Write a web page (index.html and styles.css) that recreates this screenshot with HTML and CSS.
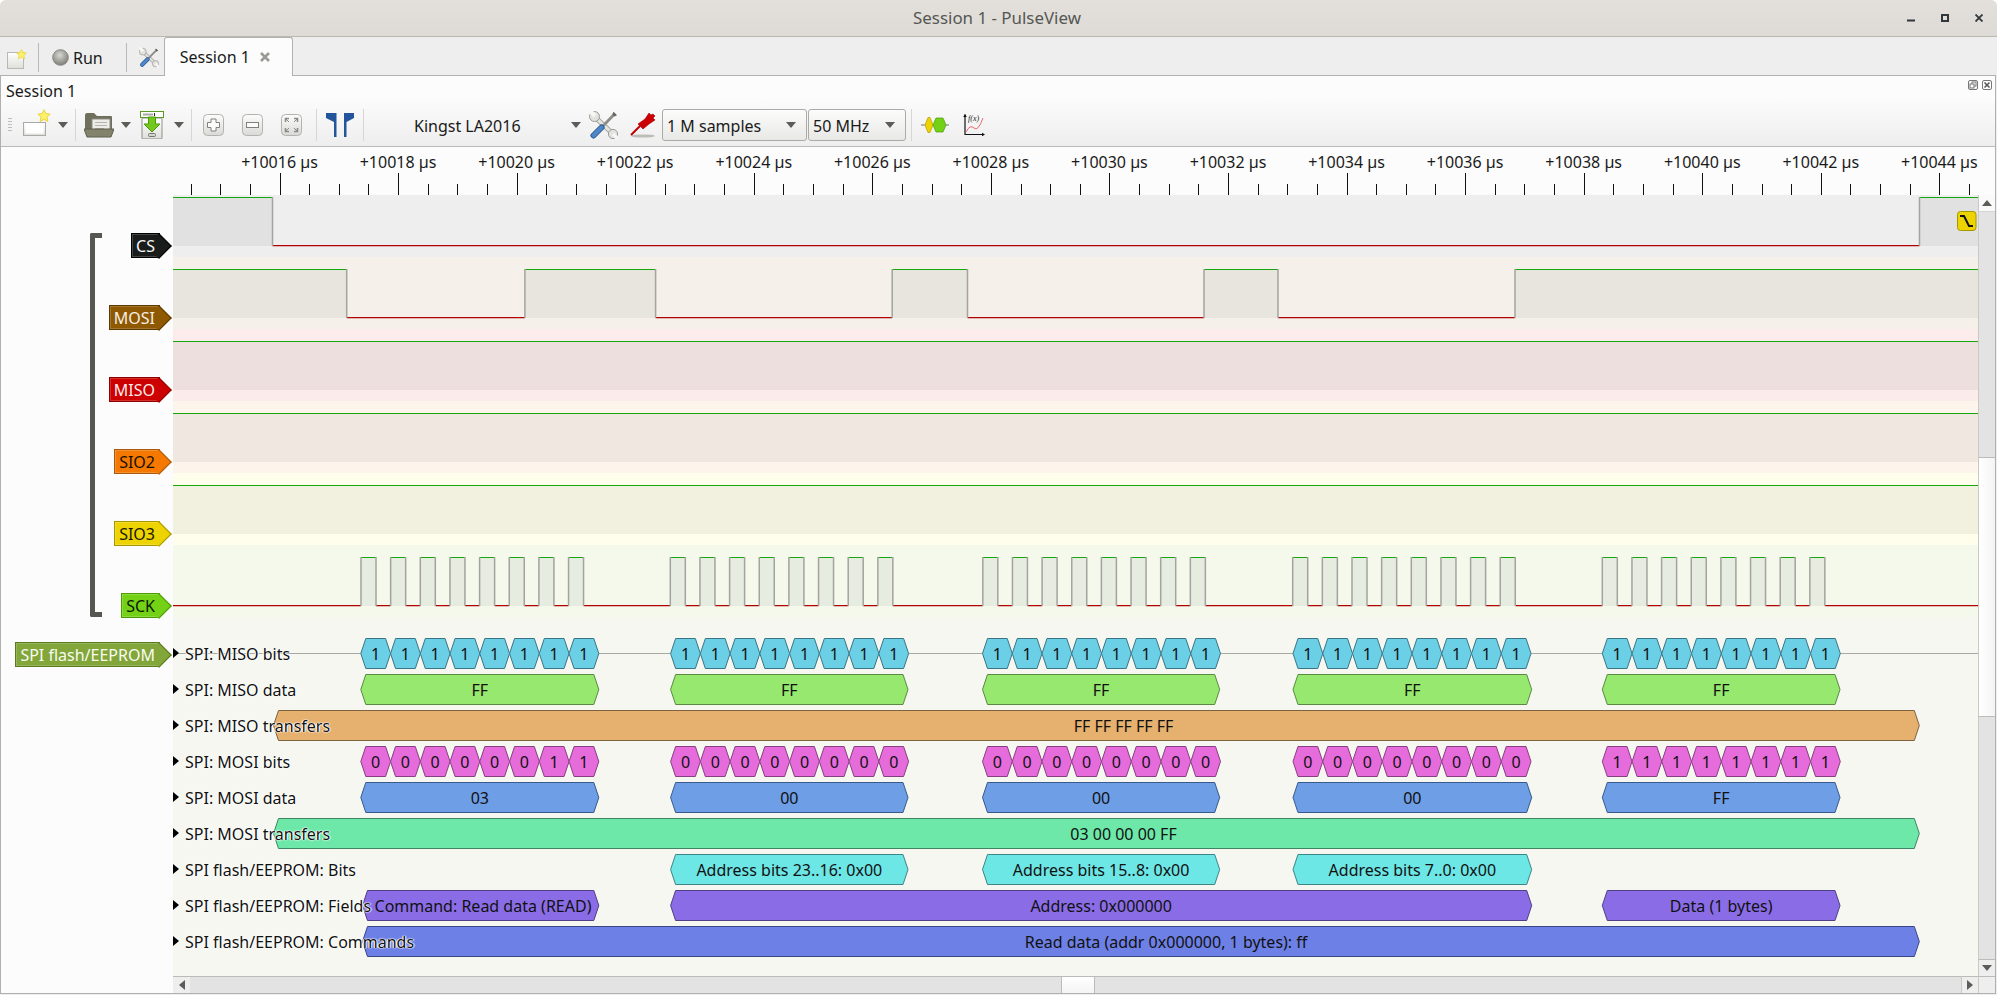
FILE: index.html
```html
<!DOCTYPE html>
<html lang="en">
<head>
    <meta charset="UTF-8">
    <meta name="viewport" content="width=device-width, initial-scale=1.0">
    <title>Session 1 - PulseView</title>
    <link rel="stylesheet" href="styles.css">
</head>
<body>
    <svg class="defs" width="0" height="0">
        <defs>
            <radialGradient id="runball" cx="45%" cy="35%" r="70%">
                <stop offset="0" stop-color="#d8d8d4"/>
                <stop offset="1" stop-color="#77776f"/>
            </radialGradient>
            <linearGradient id="btnface" x1="0" y1="0" x2="0" y2="1">
                <stop offset="0" stop-color="#fdfdfd"/>
                <stop offset="1" stop-color="#d9d9d6"/>
            </linearGradient>
            <linearGradient id="sheet" x1="0" y1="0" x2="0" y2="1">
                <stop offset="0" stop-color="#ffffff"/>
                <stop offset="1" stop-color="#dededa"/>
            </linearGradient>
            <symbol id="tools" viewBox="0 0 29 28">
                <path d="M6 6 L24 23" stroke="#9a9a96" stroke-width="5"/>
                <path d="M6 6 L24 23" stroke="#e2e2de" stroke-width="3.2"/>
                <circle cx="5.5" cy="5.5" r="5" fill="#e2e2de" stroke="#9a9a96"/>
                <path d="M1 0 L6 5" stroke="#f6f6f4" stroke-width="4.4"/>
                <circle cx="24" cy="23" r="4.6" fill="#e2e2de" stroke="#9a9a96"/>
                <path d="M29 28 L24 23" stroke="#f6f6f4" stroke-width="3.6"/>
                <path d="M26 2.5 L14 15" stroke="#8c8c88" stroke-width="2.8"/>
                <path d="M24.5 .8 L28 4.2 L25.6 5.4 L23.4 3.2 Z" fill="#66665f"/>
                <path d="M12.5 16.5 L4.5 24.5" stroke="#2f5a94" stroke-width="6" stroke-linecap="round"/>
                <path d="M12.5 16.5 L4.5 24.5" stroke="#4f86c8" stroke-width="4" stroke-linecap="round"/>
            </symbol>
            <symbol id="star" viewBox="0 0 12 12">
                <path d="M6 .6 L7.6 3.9 L11.3 4.4 L8.6 7 L9.3 10.7 L6 8.9 L2.7 10.7 L3.4 7 L.7 4.4 L4.4 3.9 Z" fill="#fdf06a" stroke="#e8d23a" stroke-width=".8"/>
            </symbol>
        </defs>
    </svg>

    <div class="window">
        <header class="titlebar">
            <span class="title">Session 1 - PulseView</span>
            <div class="win-btns">
                <svg width="8" height="8" viewBox="0 0 8 8"><rect y="5.5" width="8" height="2" fill="#31363b"/></svg>
                <svg width="8" height="8" viewBox="0 0 8 8"><rect x="1" y="1" width="6" height="6" fill="none" stroke="#31363b" stroke-width="2"/></svg>
                <svg width="8" height="8" viewBox="0 0 8 8"><path d="M.5 .5 L7.5 7.5 M7.5 .5 L.5 7.5" stroke="#31363b" stroke-width="1.8"/></svg>
            </div>
        </header>

        <div class="tabbar">
            <svg class="tab-new" width="20" height="20" viewBox="0 0 20 20">
                <rect x=".5" y="3.5" width="16" height="16" fill="url(#sheet)" stroke="#b8b8b4"/>
                <use href="#star" x="9" y="0" width="11" height="11"/>
            </svg>
            <span class="tab-sep tab-sep-a"></span>
            <svg class="run-ball" width="17" height="17" viewBox="0 0 17 17"><circle cx="8.5" cy="8.5" r="7.8" fill="url(#runball)" stroke="#888884"/></svg>
            <span class="run-text">Run</span>
            <span class="tab-sep tab-sep-b"></span>
            <svg class="tab-tools" width="20" height="21"><use href="#tools" width="20" height="21"/></svg>
            <div class="tab">
                <span>Session 1</span>
                <svg class="tab-close" width="10" height="10" viewBox="0 0 10 10"><path d="M1 1 L9 9 M9 1 L1 9" stroke="#999995" stroke-width="2.6"/></svg>
            </div>
        </div>

        <section class="panel">
            <div class="dock-title">
                <span>Session 1</span>
                <div class="dock-btns">
                    <svg width="10" height="10" viewBox="0 0 10 10"><rect x=".5" y=".5" width="9" height="9" rx="1.5" fill="none" stroke="#777"/><rect x="4" y="2" width="4" height="4" fill="none" stroke="#777"/><rect x="2" y="4" width="4" height="4" fill="#fcfcfc" stroke="#777"/></svg>
                    <svg width="10" height="10" viewBox="0 0 10 10"><rect x=".5" y=".5" width="9" height="9" rx="1.5" fill="none" stroke="#777"/><path d="M2.5 2.5 L7.5 7.5 M7.5 2.5 L2.5 7.5" stroke="#555" stroke-width="1.5"/></svg>
                </div>
            </div>

            <div class="toolbar">
                <span class="handle"></span>
                <svg class="tb-new" width="28" height="27" viewBox="0 0 28 27">
                    <rect x=".5" y="13.5" width="22" height="13" fill="url(#sheet)" stroke="#a9a9a5"/>
                    <rect x="2.5" y="15.5" width="18" height="9" fill="#fff"/>
                    <use href="#star" x="14" y="0" width="14" height="14"/>
                </svg>
                <span class="drop tb-drop"></span>
                <span class="sep tb-sep"></span>
                <svg class="tb-open" width="30" height="26" viewBox="0 0 30 26">
                    <path d="M1 3 Q1 1 3 1 H10 L13 4 H27 Q28 4 28 5 V20 H1 Z" fill="#6f6f5c"/>
                    <rect x="8" y="7" width="18" height="13" fill="#ecece8" stroke="#8d8d84"/>
                    <path d="M11 10.5 H23 M11 13.5 H23 M11 16.5 H20" stroke="#b5b5ae"/>
                    <path d="M0 17 H30 L27 25 H3 Z" fill="#83836d" stroke="#5f5f4f"/>
                </svg>
                <span class="drop tb-drop"></span>
                <svg class="tb-save" width="24" height="28" viewBox="0 0 24 28">
                    <rect x="2" y="7" width="20" height="21" rx="1" fill="url(#sheet)" stroke="#8f8f8a"/>
                    <rect x=".5" y=".5" width="23" height="6" fill="#fff" stroke="#5a9a20"/>
                    <rect x="3" y="2.5" width="10" height="2" fill="#a8a8a4"/><rect x="14" y="2" width="1" height="3" fill="#222"/>
                    <path d="M8.5 6 H15.5 V13 H20 L12 21 L4 13 H8.5 Z" fill="#73c820" stroke="#4e9a06"/>
                    <rect x="8.5" y="22.5" width="7" height="3" rx="1" fill="#d4d4d0" stroke="#77776f"/>
                </svg>
                <span class="drop tb-drop-wide"></span>
                <span class="sep tb-sep"></span>
                <svg class="tb-plus" width="21" height="22" viewBox="0 0 21 22">
                    <rect x=".5" y=".5" width="20" height="21" rx="4" fill="url(#btnface)" stroke="#b2b2ae"/>
                    <path d="M8 5 H13 V8.5 H16.5 V13.5 H13 V17 H8 V13.5 H4.5 V8.5 H8 Z" fill="#fbfbfb" stroke="#80807c"/>
                </svg>
                <svg class="tb-minus" width="21" height="22" viewBox="0 0 21 22">
                    <rect x=".5" y=".5" width="20" height="21" rx="4" fill="url(#btnface)" stroke="#b2b2ae"/>
                    <rect x="4.5" y="8.5" width="12" height="5" fill="#fbfbfb" stroke="#80807c"/>
                </svg>
                <svg class="tb-fit" width="21" height="22" viewBox="0 0 21 22">
                    <rect x=".5" y=".5" width="20" height="21" rx="4" fill="url(#btnface)" stroke="#b2b2ae"/>
                    <path d="M4.5 8 V4.5 H8 M13 4.5 H16.5 V8 M4.5 14 V17.5 H8 M13 17.5 H16.5 V14" fill="none" stroke="#8a8a86" stroke-width="1.6"/>
                    <path d="M5 5 L8 8 M16 5 L13 8 M5 17 L8 14 M16 17 L13 14" stroke="#8a8a86"/>
                </svg>
                <span class="sep tb-sep-fit"></span>
                <svg class="tb-markers" width="28" height="24" viewBox="0 0 28 24">
                    <path d="M0 0 H10.5 V24 H8 V9 L0 5 Z" fill="#24559c"/>
                    <path d="M28 0 H18 V24 H20.5 V9 L28 5 Z" fill="#24559c"/>
                </svg>
                <span class="sep tb-sep-markers"></span>
                <div class="device">
                    <span>Kingst LA2016</span>
                    <span class="drop"></span>
                </div>
                <svg class="tb-tools" width="29" height="28"><use href="#tools" width="29" height="28"/></svg>
                <svg class="tb-probe" width="26" height="27" viewBox="0 0 26 27">
                    <ellipse cx="13" cy="25" rx="12" ry="1.6" fill="#bdbdb8"/>
                    <path d="M1 24 L10 15" stroke="#c00000" stroke-width="2"/>
                    <path d="M8 13 L15 8 L19 2 L21 4 L23 3 L25 5 L23 7 L25 9 L19 13 L13 18 Z" fill="#cc0000" stroke="#a40000" stroke-width=".6"/>
                </svg>
                <div class="combo combo-samples">
                    <span>1 M samples</span>
                    <span class="drop"></span>
                </div>
                <div class="combo combo-rate">
                    <span>50 MHz</span>
                    <span class="drop"></span>
                </div>
                <span class="sep tb-sep-rate"></span>
                <svg class="tb-decoder" width="28" height="16" viewBox="0 0 28 16">
                    <path d="M0 8 H28" stroke="#777"/>
                    <path d="M4 8 L7 .5 H9 L12 8 L9 15.5 H7 Z" fill="#edd400" stroke="#b49a00" stroke-width=".7"/>
                    <path d="M12 8 L15 1 H22 L25 8 L22 15 H15 Z" fill="#73d216" stroke="#4e9a06" stroke-width=".7"/>
                </svg>
                <svg class="tb-math" width="22" height="22" viewBox="0 0 22 22">
                    <path d="M2 .5 V20.5 H21" fill="none" stroke="#111" stroke-width="1.2"/>
                    <path d="M2 0 L.2 3 H3.8 Z M22 20.5 L19 18.7 V22.3 Z" fill="#111"/>
                    <path d="M3 18 Q7 10 11 14 T20 4" fill="none" stroke="#ef6a6a" stroke-width="1"/>
                    <text class="math-text" x="5" y="7">f(x)</text>
                </svg>
            </div>

            <div class="ruler"><svg id="ruler" width="1977" height="48" viewBox="1 147 1977 48"></svg></div>

            <div class="view">
                <div class="headers">
                    <div class="bracket"></div>
                    <div class="sig-row sig-cs"><div class="tag tag-cs">CS</div></div>
                    <div class="sig-row"><div class="tag tag-mosi">MOSI</div></div>
                    <div class="sig-row"><div class="tag tag-miso">MISO</div></div>
                    <div class="sig-row"><div class="tag tag-sio2">SIO2</div></div>
                    <div class="sig-row"><div class="tag tag-sio3">SIO3</div></div>
                    <div class="sig-row"><div class="tag tag-sck">SCK</div></div>
                    <div class="sig-row sig-dec"><div class="tag tag-dec">SPI flash/EEPROM</div></div>
                </div>

                <div class="traces">
                    <div class="band band-cs"></div>
                    <div class="band band-mosi"></div>
                    <div class="band band-miso"></div>
                    <div class="band band-sio2"></div>
                    <div class="band band-sio3"></div>
                    <div class="band band-sck"></div>
                    <div class="band band-dec"></div>
                    <svg id="canvas" class="canvas" width="1805" height="781" viewBox="173 195 1805 781"></svg>
                    <ul class="labels">
                        <li>SPI: MISO bits</li>
                        <li>SPI: MISO data</li>
                        <li>SPI: MISO transfers</li>
                        <li>SPI: MOSI bits</li>
                        <li>SPI: MOSI data</li>
                        <li>SPI: MOSI transfers</li>
                        <li>SPI flash/EEPROM: Bits</li>
                        <li>SPI flash/EEPROM: Fields</li>
                        <li>SPI flash/EEPROM: Commands</li>
                    </ul>
                </div>

                <div class="vscroll">
                    <div class="vbtn vbtn-up"><span class="arrow-up"></span></div>
                    <div class="vtrack"><div class="vthumb"></div></div>
                    <div class="vbtn vbtn-down"><span class="arrow-down"></span></div>
                </div>
            </div>

            <div class="hscroll">
                <div class="hleft"></div>
                <div class="hbtn"><span class="arrow-left"></span></div>
                <div class="htrack"><div class="hthumb"></div></div>
                <div class="hbtn hbtn-right"><span class="arrow-right"></span></div>
                <div class="hcorner"></div>
            </div>
        </section>
    </div>

    <script src="app.js"></script>
</body>
</html>
```

FILE: styles.css
```css
* {
    box-sizing: border-box;
}

body {
    margin: 0;
    background-color: #ffffff;
    font-family: "Noto Sans", sans-serif;
    font-size: 16px;
    color: #1a1a1a;
    overflow: hidden;
}

.defs {
    display: block;
    height: 0;
}

svg {
    display: block;
    flex: none;
}

.window {
    height: 995px;
    display: flex;
    flex-direction: column;
    background-color: #eeeeee;
    border-radius: 6px 6px 0 0;
    overflow: hidden;
}

/* title bar */
.titlebar {
    height: 37px;
    flex: none;
    display: flex;
    align-items: center;
    justify-content: center;
    position: relative;
    background: linear-gradient(#e3e0dc, #dedbd6);
    border-bottom: 1px solid #bdb8b0;
}

.title {
    color: #555753;
    font-size: 16.9px;
    margin: -1px 3px 0 0;
}

.win-btns {
    position: absolute;
    right: 14px;
    top: 14px;
    display: flex;
    gap: 26px;
}

/* tabs row */
.tabbar {
    height: 38px;
    flex: none;
    display: flex;
    align-items: flex-start;
    background-color: #eeeeee;
}

.tab-new {
    margin: 12px 0 0 7px;
}

.tab-sep {
    width: 1px;
    height: 29px;
    margin-top: 6px;
    background-color: #b9b9b5;
}

.tab-sep-a {
    margin-left: 11px;
}

.run-ball {
    margin: 12px 0 0 13px;
}

.run-text {
    margin: 9px 0 0 4px;
    line-height: 24px;
}

.tab-sep-b {
    margin-left: 23px;
}

.tab-tools {
    margin: 10px 0 0 12px;
}

.tab {
    width: 129px;
    height: 39px;
    margin-left: 5px;
    padding-left: 15px;
    display: flex;
    align-items: center;
    position: relative;
    z-index: 1;
    background-color: #fcfcfc;
    border: 1px solid #b0b0ac;
    border-bottom: none;
    border-radius: 3px 3px 0 0;
}

.tab-close {
    margin-left: 10px;
}

/* docked session panel */
.panel {
    flex: 1;
    margin: 0 1px 1px 0;
    display: flex;
    flex-direction: column;
    background-color: #fcfcfc;
    border: 1px solid #b0b0ac;
}

.dock-title {
    height: 24px;
    flex: none;
    padding: 0 3px 0 5px;
    display: flex;
    align-items: center;
    justify-content: space-between;
}

.dock-title > span {
    margin-top: 6px;
}

.dock-btns {
    display: flex;
    gap: 4px;
    margin-top: -6px;
}

.toolbar {
    height: 47px;
    flex: none;
    padding: 3px 0 0 7px;
    display: flex;
    align-items: center;
    background: linear-gradient(#fbfbfb, #eeeeee);
    border-bottom: 1px solid #bbbbb8;
}

.handle {
    width: 4px;
    height: 15px;
    background-image: radial-gradient(#bdbdb9 40%, transparent 45%);
    background-size: 2px 3px;
}

.sep {
    width: 1px;
    height: 32px;
    background-color: #d6d6d2;
}

.drop {
    width: 0;
    height: 0;
    flex: none;
    border-left: 5px solid transparent;
    border-right: 5px solid transparent;
    border-top: 6px solid #5c5c58;
}

.tb-new { margin-left: 11px; margin-top: -4px; }
.tb-drop { margin-left: 7px; }
.tb-drop-wide { margin-left: 10px; }
.tb-sep { margin-left: 7px; }
.tb-open { margin-left: 8px; }
.tb-save { margin-left: 9px; }
.tb-plus { margin-left: 11px; }
.tb-minus { margin-left: 18px; }
.tb-fit { margin-left: 18px; }
.tb-sep-fit { margin-left: 14px; }
.tb-markers { margin-left: 9px; }
.tb-sep-markers { margin-left: 9px; }
.tb-tools { margin-left: 8px; }
.tb-probe { margin-left: 12px; }
.tb-sep-rate { margin-left: 5px; }
.tb-decoder { margin-left: 9px; }
.tb-math { margin-left: 14px; }

.device {
    width: 217px;
    padding-left: 50px;
    display: flex;
    align-items: center;
    justify-content: space-between;
}

.device > span:first-child,
.combo > span:first-child {
    margin-top: 2px;
}

.combo {
    height: 32px;
    padding: 0 10px 0 4px;
    display: flex;
    align-items: center;
    justify-content: space-between;
    background: linear-gradient(#fcfcfc, #e8e8e6);
    border: 1px solid #aaaaa6;
    border-radius: 3px;
}

.combo-samples {
    width: 145px;
    margin-left: 6px;
}

.combo-rate {
    width: 98px;
    margin-left: 1px;
}

.math-text {
    font-family: "Liberation Serif", serif;
    font-size: 8px;
    font-style: italic;
    fill: #222;
}

/* time ruler */
.ruler {
    height: 48px;
    flex: none;
}

.ruler-label {
    font-family: "Noto Sans", sans-serif;
    font-size: 16px;
    text-anchor: middle;
    fill: #1a1a1a;
}

/* trace view */
.view {
    height: 781px;
    flex: none;
    display: flex;
}

.headers {
    width: 172px;
    flex: none;
    position: relative;
    padding-right: 1px;
}

.bracket {
    position: absolute;
    left: 89px;
    top: 38px;
    width: 12px;
    height: 384px;
    border: 5px solid #565652;
    border-right: none;
    border-radius: 2px 0 0 2px;
}

.sig-row {
    height: 72px;
    display: flex;
    justify-content: flex-end;
    align-items: flex-end;
}

.sig-cs {
    height: 62px;
}

.sig-dec {
    height: 49px;
}

.tag {
    height: 25px;
    margin-right: 12px;
    margin-bottom: -1px;
    padding: 0 4px;
    position: relative;
    z-index: 0;
    line-height: 25px;
    border: 1px solid;
    box-shadow: inset 0 0 0 1px rgba(255, 255, 255, 0.18);
    white-space: nowrap;
}

/* the point of the tag, behind its text */
.tag::after {
    content: "";
    position: absolute;
    z-index: -1;
    top: 2.5px;
    right: -9px;
    width: 17px;
    height: 17px;
    background-color: inherit;
    border-top: 1px solid;
    border-right: 1px solid;
    border-color: inherit;
    transform: rotate(45deg);
}

.tag-cs { background-color: #1a1c1c; border-color: #000000; color: #f4f4f4; }
.tag-mosi { background-color: #8f5902; border-color: #5c3a02; color: #f6efe4; }
.tag-miso { background-color: #cc0000; border-color: #8f0000; color: #fbeaea; }
.tag-sio2 { background-color: #f57900; border-color: #a85a12; color: #1a1000; }
.tag-sio3 { background-color: #edd400; border-color: #a89600; color: #1a1800; }
.tag-sck { background-color: #73d216; border-color: #4e9a06; color: #0d1a00; }
.tag-dec { background-color: #83a63a; border-color: #5a7a20; color: #f8fbf0; }

.traces {
    flex: 1;
    position: relative;
    display: flex;
    flex-direction: column;
    overflow: hidden;
}

.band {
    height: 72px;
    flex: none;
}

.band-cs { height: 62px; background-color: #eeeeee; }
.band-mosi { background-color: #f5f1ea; }
.band-miso { background-color: #fbebeb; }
.band-sio2 { background-color: #fdf5ec; }
.band-sio3 { background-color: #fffeec; }
.band-sck { background-color: #f4f9ec; }
.band-dec { flex: 1; background-color: #f5f7f0; }

.canvas {
    position: absolute;
    left: 0;
    top: 0;
}

.ann {
    font-family: "Noto Sans", sans-serif;
    font-size: 16px;
    text-anchor: middle;
    fill: #111111;
}

.labels {
    position: absolute;
    left: 0;
    top: 441px;
    margin: 0;
    padding: 0;
    list-style: none;
}

.labels li {
    height: 36px;
    display: flex;
    align-items: center;
    gap: 6px;
    white-space: nowrap;
    color: #111111;
    text-shadow: 0 0 1px #ffffff, 0 0 2px #ffffff, 1px 0 1px #ffffff, -1px 0 1px #ffffff;
}

.labels li::before {
    content: "";
    width: 0;
    height: 0;
    margin-top: -2px;
    border-top: 5.5px solid transparent;
    border-bottom: 5.5px solid transparent;
    border-left: 6px solid #000000;
}

/* scrollbars */
.vscroll {
    width: 17px;
    flex: none;
    display: flex;
    flex-direction: column;
    border-left: 1px solid #c9c9c5;
    background-color: #e3e3e3;
}

.vbtn {
    height: 17px;
    flex: none;
    display: flex;
    align-items: center;
    justify-content: center;
}

.vbtn-up {
    background-color: #fafafa;
    border-bottom: 1px solid #d4d4d0;
}

.vbtn-down {
    background-color: #eeeeee;
    border-top: 1px solid #bbbbb8;
}

.vtrack {
    flex: 1;
    padding-top: 245px;
}

.vthumb {
    height: 260px;
    background: linear-gradient(90deg, #ffffff, #f4f4f4);
    border-top: 1px solid #bbbbb8;
    border-bottom: 1px solid #bbbbb8;
}

.arrow-up {
    border-left: 5px solid transparent;
    border-right: 5px solid transparent;
    border-bottom: 6px solid #5c5c58;
}

.arrow-down {
    border-left: 5px solid transparent;
    border-right: 5px solid transparent;
    border-top: 6px solid #5c5c58;
}

.arrow-left {
    border-top: 5px solid transparent;
    border-bottom: 5px solid transparent;
    border-right: 6px solid #5c5c58;
}

.arrow-right {
    border-top: 5px solid transparent;
    border-bottom: 5px solid transparent;
    border-left: 6px solid #5c5c58;
}

.hscroll {
    height: 17px;
    flex: none;
    display: flex;
}

.hleft {
    width: 172px;
    flex: none;
}

.hbtn {
    width: 17px;
    flex: none;
    display: flex;
    align-items: center;
    justify-content: center;
    background-color: #eeeeee;
    border-top: 1px solid #bbbbb8;
}

.hbtn-right {
    border-left: 1px solid #c9c9c5;
}

.htrack {
    flex: 1;
    padding-left: 871px;
    background-color: #e3e3e3;
    border-top: 1px solid #bbbbb8;
}

.hthumb {
    width: 34px;
    height: 100%;
    background: linear-gradient(#ffffff, #f4f4f4);
    border-left: 1px solid #bbbbb8;
    border-right: 1px solid #bbbbb8;
}

.hcorner {
    width: 17px;
    flex: none;
    background-color: #eeeeee;
    border-top: 1px solid #bbbbb8;
    border-left: 1px solid #c9c9c5;
}
```

FILE: app.js
```js
const RULER_START = 190.6;
const TICK_STEP = 29.64;
const CANVAS_RIGHT = 1978;

function drawRuler() {
    let out = "";
    for (let i = 0; ; i++) {
        const x = RULER_START + i * TICK_STEP;
        if (x > CANVAS_RIGHT) break;
        const major = (i + 1) % 4 === 0 && i > 0;
        const px = Math.round(x);
        out += `<rect x="${px}" y="${major ? 173 : 184}" width="1" height="${major ? 22 : 11}" fill="#111"/>`;
        if (major) {
            const label = 10016 + 2 * ((i + 1) / 4 - 1);
            out += `<text class="ruler-label" x="${x}" y="168">+${label} µs</text>`;
        }
    }
    document.getElementById("ruler").innerHTML = out;
}

// edges: x positions where the level flips, first level given by startHigh
function logic(top, edges, startHigh) {
    const low = top + 48;
    const xs = [173, ...edges, CANVAS_RIGHT];
    let out = "";
    let high = startHigh;
    for (let i = 0; i < xs.length - 1; i++) {
        const x = xs[i];
        const w = xs[i + 1] - x;
        if (high) {
            out += `<rect x="${x}" y="${top}" width="${w}" height="49" fill="#000" fill-opacity="0.05"/>`;
            out += `<rect x="${x}" y="${top}" width="${w}" height="1" fill="#14a80c"/>`;
        } else {
            out += `<rect x="${x}" y="${low}" width="${w}" height="1.25" fill="#b00000"/>`;
        }
        high = !high;
    }
    edges.forEach(x => {
        out += `<rect x="${x - 0.75}" y="${top}" width="1.5" height="49" fill="#a3a39f"/>`;
    });
    return out;
}

function sckEdges() {
    const edges = [];
    [361, 670.3, 982.8, 1292.7, 1602.3].forEach(start => {
        for (let i = 0; i < 8; i++) {
            const x = start + i * 29.65;
            edges.push(x, x + 15);
        }
    });
    return edges;
}

function shape(x0, x1, y, c) {
    const t = y - 15, b = y + 15, n = 5;
    return `<polygon points="${x0},${y} ${x0 + n},${t} ${x1 - n},${t} ${x1},${y} ${x1 - n},${b} ${x0 + n},${b}" fill="${c[0]}" stroke="${c[1]}"/>`;
}

function ann(x0, x1, row, c, text, textX) {
    const y = 653.5 + row * 36;
    const mid = textX === undefined ? (x0 + x1) / 2 : textX;
    return shape(x0, x1, y, c) + `<text class="ann" x="${mid}" y="${y + 6}">${text}</text>`;
}

function bits(x0, row, c, values) {
    const w = 29.75;
    let out = "";
    values.split("").forEach((v, i) => {
        out += ann(x0 + i * w, x0 + (i + 1) * w, row, c, v);
    });
    return out;
}

const COLORS = {
    misoBits: ["#6bcfe6", "#3b7585"],
    misoData: ["#97e86e", "#5a8a42"],
    misoTrans: ["#e6b06e", "#7d6340"],
    mosiBits: ["#e56cda", "#86407f"],
    mosiData: ["#6d9ee6", "#385a8c"],
    mosiTrans: ["#6de8a9", "#3f8562"],
    flashBits: ["#6de6e6", "#3f8585"],
    fields: ["#8a6de6", "#4f3f85"],
    commands: ["#6d80e6", "#3b4686"]
};

const GROUPS = [
    [360.8, 598.8],
    [670.6, 908],
    [982.5, 1219.7],
    [1293, 1531.7],
    [1602.3, 1840]
];

function drawCanvas() {
    let out = "";

    out += logic(197, [272.5, 1919.5], true);
    out += logic(269, [346.7, 524.9, 655.6, 892.2, 967.5, 1204, 1278, 1515], true);
    out += logic(341, [], true);
    out += logic(413, [], true);
    out += logic(485, [], true);
    out += logic(557, sckEdges(), false);

    // bits row has a baseline running right across
    out += `<rect x="173" y="653" width="1805" height="1" fill="#a8a8a4"/>`;

    const mosiBits = ["00000011", "00000000", "00000000", "00000000", "11111111"];
    const mosiData = ["03", "00", "00", "00", "FF"];
    GROUPS.forEach((g, i) => {
        out += bits(g[0], 0, COLORS.misoBits, "11111111");
        out += ann(g[0], g[1], 1, COLORS.misoData, "FF");
        out += bits(g[0], 3, COLORS.mosiBits, mosiBits[i]);
        out += ann(g[0], g[1], 4, COLORS.mosiData, mosiData[i]);
    });

    out += ann(273.5, 1919.3, 2, COLORS.misoTrans, "FF FF FF FF FF", 1123.5);
    out += ann(273.5, 1919.3, 5, COLORS.mosiTrans, "03 00 00 00 FF", 1123.5);

    out += ann(GROUPS[1][0], GROUPS[1][1], 6, COLORS.flashBits, "Address bits 23..16: 0x00");
    out += ann(GROUPS[2][0], GROUPS[2][1], 6, COLORS.flashBits, "Address bits 15..8: 0x00");
    out += ann(GROUPS[3][0], GROUPS[3][1], 6, COLORS.flashBits, "Address bits 7..0: 0x00");

    out += ann(362.5, 598.8, 7, COLORS.fields, "Command: Read data (READ)", 483);
    out += ann(GROUPS[1][0], GROUPS[3][1], 7, COLORS.fields, "Address: 0x000000");
    out += ann(GROUPS[4][0], GROUPS[4][1], 7, COLORS.fields, "Data (1 bytes)");

    out += ann(362.5, 1919.3, 8, COLORS.commands, "Read data (addr 0x000000, 1 bytes): ff", 1166);

    // trigger marker on CS
    out += `<rect x="1957.5" y="211.5" width="18.5" height="19" rx="3" fill="#edd400" stroke="#a89600"/>`;
    out += `<path d="M1960 216 H1964 L1969 226 H1973" fill="none" stroke="#111" stroke-width="2"/>`;

    document.getElementById("canvas").innerHTML = out;
}

drawRuler();
drawCanvas();
```
